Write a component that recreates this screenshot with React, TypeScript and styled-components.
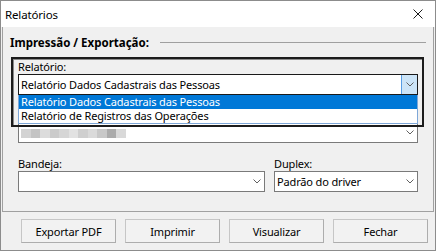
import React from 'react'
import styled, { createGlobalStyle } from 'styled-components'

const GlobalStyle = createGlobalStyle`
  html, body {
    margin: 0;
    padding: 0;
    background: #ffffff;
  }
  body {
    font-family: 'Noto Sans', 'Open Sans', sans-serif;
    font-size: 11px;
    letter-spacing: -0.15px;
    color: #000;
  }
`

const Window = styled.div`
  width: 436px;
  height: 251px;
  box-sizing: border-box;
  border: 1px solid #8c8c8c;
  background: #f0f0f0;
  display: flex;
  flex-direction: column;
`

const TitleBar = styled.div`
  height: 26px;
  flex: none;
  background: #fff;
  display: flex;
  align-items: center;
  justify-content: space-between;
  padding: 0 12px 0 4px;
`

const Title = styled.span`
  font-size: 11.5px;
  line-height: 15px;
`

const Panel = styled.div`
  position: relative;
  margin: 0 1px;
  height: 185px;
  box-sizing: border-box;
  border: 1px solid #a0a0a0;
  border-top: none;
  padding: 0 15px;
`

const Header = styled.div`
  display: flex;
  align-items: center;
  gap: 11px;
  margin: 8px 0 0 -8px;
  height: 15px;
`

const HeaderText = styled.span`
  font-weight: 700;
  font-size: 11.5px;
  letter-spacing: 0;
  white-space: nowrap;
`

const HeaderRule = styled.div`
  flex: 1;
  height: 1px;
  background: #a0a0a0;
  margin-right: -8px;
`

const Field = styled.div<{ $top: number }>`
  margin-top: ${(p) => p.$top}px;
  display: flex;
  flex-direction: column;
  min-width: 0;
`

const Label = styled.div`
  height: 15px;
  line-height: 15px;
  white-space: nowrap;
`

const ComboWrap = styled.div`
  position: relative;
`

const Combo = styled.div<{ $focused?: boolean }>`
  height: 21px;
  box-sizing: border-box;
  background: #fff;
  border: 1px solid ${(p) => (p.$focused ? '#1a1a1a' : '#7a7a7a')};
  display: flex;
  align-items: center;
  padding-left: 2px;
`

const ComboText = styled.span`
  flex: 1;
  white-space: nowrap;
  overflow: hidden;
  line-height: 15px;
`

const DropButton = styled.div<{ $active?: boolean }>`
  width: 16px;
  align-self: stretch;
  box-sizing: border-box;
  display: flex;
  align-items: center;
  justify-content: center;
  background: ${(p) => (p.$active ? '#cce4f7' : 'transparent')};
  border-left: 1px solid ${(p) => (p.$active ? '#569de5' : 'transparent')};
`

const DropList = styled.div`
  position: absolute;
  top: 100%;
  left: 0;
  right: 0;
  z-index: 2;
  background: #fff;
  border: 1px solid #7ea7d8;
  border-top: none;
  box-sizing: border-box;
  display: flex;
  flex-direction: column;
`

const ListItem = styled.div<{ $selected?: boolean }>`
  height: 14px;
  line-height: 14px;
  padding-left: 2px;
  background: ${(p) => (p.$selected ? '#0078d7' : '#fff')};
  color: ${(p) => (p.$selected ? '#fff' : '#000')};
  white-space: nowrap;
`

const FocusFrame = styled.div`
  position: absolute;
  left: 8px;
  top: 30px;
  width: 413px;
  height: 70px;
  box-sizing: border-box;
  border: 2px solid #1c1c1c;
  box-shadow: inset 1px 1px 0 #8a8a8a;
  z-index: 3;
  pointer-events: none;
`

const Pixelated = styled.div`
  display: flex;
  height: 9px;
  margin-top: 2px;
`

const Pixel = styled.span<{ $shade: string }>`
  width: 9.5px;
  height: 9px;
  background: ${(p) => p.$shade};
`

const Row = styled.div`
  display: flex;
  gap: 9px;
  margin-top: 13px;
`

const ButtonBar = styled.div`
  display: flex;
  gap: 9px;
  padding: 7px 0 0 20px;
`

const Button = styled.div`
  width: 95px;
  height: 24px;
  box-sizing: border-box;
  background: #f2f2f2;
  border: 1px solid #c6c6c6;
  border-right-color: #adadad;
  border-bottom-color: #adadad;
  display: flex;
  align-items: center;
  justify-content: center;
`

const Chevron = () => (
  <svg width="8" height="5" viewBox="0 0 8 5">
    <polyline points="0.5,0.5 4,4 7.5,0.5" fill="none" stroke="#606060" strokeWidth="1" />
  </svg>
)

const CloseIcon = () => (
  <svg width="10" height="10" viewBox="0 0 10 10">
    <path d="M0.5 0.5 L9.5 9.5 M9.5 0.5 L0.5 9.5" stroke="#1a1a1a" strokeWidth="1" />
  </svg>
)

const shades = ['#d3d3d3', '#c4c4c4', '#dcdcdc', '#cbcbcb', '#d6d6d6', '#e2e2e2', '#cfcfcf', '#dadada', '#c8c8c8', '#ababab', '#d9d9d9']

export default function App() {
  return (
    <>
      <GlobalStyle />
      <Window>
        <TitleBar>
          <Title>Relatórios</Title>
          <CloseIcon />
        </TitleBar>
        <Panel>
          <Header>
            <HeaderText>Impressão / Exportação:</HeaderText>
            <HeaderRule />
          </Header>

          <Field $top={9}>
            <Label>Relatório:</Label>
            <ComboWrap>
              <Combo $focused>
                <ComboText>Relatório Dados Cadastrais das Pessoas</ComboText>
                <DropButton $active>
                  <Chevron />
                </DropButton>
              </Combo>
              <DropList>
                <ListItem $selected>Relatório Dados Cadastrais das Pessoas</ListItem>
                <ListItem>Relatório de Registros das Operações</ListItem>
              </DropList>
            </ComboWrap>
          </Field>

          <Field $top={12}>
            <Label>&nbsp;</Label>
            <Combo>
              <ComboText>
                <Pixelated>
                  {shades.map((s, i) => (
                    <Pixel key={i} $shade={s} />
                  ))}
                </Pixelated>
              </ComboText>
              <DropButton>
                <Chevron />
              </DropButton>
            </Combo>
          </Field>

          <Row>
            <Field $top={0} style={{ width: 247 }}>
              <Label>Bandeja:</Label>
              <Combo>
                <ComboText />
                <DropButton>
                  <Chevron />
                </DropButton>
              </Combo>
            </Field>
            <Field $top={0} style={{ flex: 1 }}>
              <Label>Duplex:</Label>
              <Combo>
                <ComboText>Padrão do driver</ComboText>
                <DropButton>
                  <Chevron />
                </DropButton>
              </Combo>
            </Field>
          </Row>

          <FocusFrame />
        </Panel>
        <ButtonBar>
          <Button>Exportar PDF</Button>
          <Button>Imprimir</Button>
          <Button>Visualizar</Button>
          <Button>Fechar</Button>
        </ButtonBar>
      </Window>
    </>
  )
}
